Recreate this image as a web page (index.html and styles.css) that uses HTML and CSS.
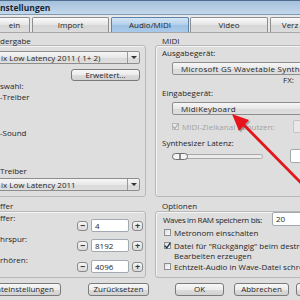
FILE: index.html
```html
<!DOCTYPE html>
<html>
<head>
<meta charset="utf-8">
<link rel="stylesheet" href="styles.css">
</head>
<body>
<div class="window">
  <div class="titlebar">nstellungen</div>
  <div class="tabs">
    <div class="tab tab-cut">ein</div>
    <div class="tab tab-import">Import</div>
    <div class="tab tab-sel">Audio/MIDI</div>
    <div class="tab tab-video">Video</div>
    <div class="tab tab-verz">Verz</div>
  </div>
  <div class="panel">
    <div class="grid">
      <div class="group left">
        <div class="glabel glabel-left">dergabe</div>
        <div class="gbox box-playback">
          <div class="combo combo-left"><span class="combo-text">ix Low Latency 2011 ( 1+ 2)</span><span class="combo-arrow"></span></div>
          <div class="btn btn-erw">Erweitert...</div>
          <div class="txt t-swahl">swahl:</div>
          <div class="txt t-treiber1">-Treiber</div>
          <div class="txt t-sound">-Sound</div>
          <div class="txt t-treiber2">Treiber</div>
          <div class="combo combo-left combo-2"><span class="combo-text">ix Low Latency 2011</span><span class="combo-arrow"></span></div>
        </div>
      </div>
      <div class="group right">
        <div class="glabel">MIDI</div>
        <div class="gbox box-midi">
          <div class="txt t-ausgabe">Ausgabegerät:</div>
          <div class="combo combo-right combo-out"><span class="combo-text">Microsoft GS Wavetable Synth</span></div>
          <div class="txt t-fx">FX:</div>
          <div class="txt t-eingabe">Eingabegerät:</div>
          <div class="combo combo-right combo-in"><span class="combo-text">MidiKeyboard</span></div>
          <div class="cbrow cbrow-dis">
            <span class="cb cb-dis"><svg width="7" height="7" viewBox="0 0 7 7"><path d="M1 3.5 L3 5.5 L6 1" fill="none" stroke="#a9a9a9" stroke-width="1.2"/></svg></span>
            <span class="cbtext-dis">MIDI-Zielkanal benutzen:</span>
            <span class="field field-dis"></span>
          </div>
          <div class="txt t-latenz">Synthesizer Latenz:</div>
          <div class="sliderrow">
            <div class="track"><div class="thumb"></div></div>
            <span class="field field-lat"></span>
          </div>
        </div>
      </div>

      <div class="group left">
        <div class="glabel glabel-left">ffer</div>
        <div class="gbox box-buffer">
          <div class="srow">
            <span class="slabel">ffer:</span>
            <div class="spin"><span class="sbtn">−</span><span class="field sfield">4</span><span class="sbtn">+</span></div>
          </div>
          <div class="srow">
            <span class="slabel">hrspur:</span>
            <div class="spin"><span class="sbtn">−</span><span class="field sfield">8192</span><span class="sbtn">+</span></div>
          </div>
          <div class="srow">
            <span class="slabel">rhören:</span>
            <div class="spin"><span class="sbtn">−</span><span class="field sfield">4096</span><span class="sbtn">+</span></div>
          </div>
        </div>
      </div>
      <div class="group right">
        <div class="glabel">Optionen</div>
        <div class="gbox box-opt">
          <div class="wrow"><span class="wlabel">Waves im RAM speichern bis:</span><span class="field field-waves">20</span></div>
          <div class="orow orow-1"><span class="cb"></span><span>Metronom einschalten</span></div>
          <div class="orow orow-2"><span class="cb"><svg width="7" height="7" viewBox="0 0 7 7"><path d="M0.8 3.6 L2.8 5.8 L6.3 0.8" fill="none" stroke="#1f3550" stroke-width="1.4"/></svg></span><span class="otext2">Datei für "Rückgängig" beim destruktiven<br>Bearbeiten erzeugen</span></div>
          <div class="orow orow-3"><span class="cb"></span><span>Echtzeit-Audio in Wave-Datei schreiben</span></div>
        </div>
      </div>
    </div>
    <div class="buttons">
      <div class="btnrow-left">
        <div class="btn btn-std">nteinstellungen</div>
        <div class="btn btn-reset">Zurücksetzen</div>
      </div>
      <div class="btnrow-right">
        <div class="btn btn-ok">OK</div>
        <div class="btn btn-cancel">Abbrechen</div>
        <div class="btn btn-more">Hilfe</div>
      </div>
    </div>
  </div>
</div>
<svg class="arrow" width="300" height="300" viewBox="0 0 300 300">
  <g opacity="0.25" transform="translate(1.5,1.5)">
    <line x1="242" y1="123" x2="302" y2="184" stroke="#000" stroke-width="2.6"/>
    <polygon points="232,114 249,120 239,131" fill="#000"/>
  </g>
  <line x1="242" y1="123" x2="302" y2="184" stroke="#e8141c" stroke-width="2.6"/>
  <polygon points="232,114 249,120 239,131" fill="#e8141c"/>
</svg>
</body>
</html>
```
FILE: styles.css
```css
html, body {
  margin: 0;
  padding: 0;
}
body {
  width: 300px;
  height: 300px;
  overflow: hidden;
  position: relative;
  background: #dedede;
  font-family: "Open Sans", "DejaVu Sans", sans-serif;
  font-size: 8px;
  color: #262626;
}
.window {
  width: 300px;
  display: flex;
  flex-direction: column;
}
.titlebar {
  border-top: 1px solid #4d6e90;
  background: linear-gradient(#a6c1dc, #c3d7eb);
  font-weight: bold;
  font-size: 8.5px;
  line-height: 14px;
  color: #1a2633;
  white-space: nowrap;
  box-sizing: border-box;
  height: 15px;
  border-bottom: 1px solid #7f9ab5;
}
.tabs {
  height: 17px;
  box-sizing: border-box;
  padding-top: 2px;
  display: flex;
  align-items: flex-end;
  background: #e9e9e9;
  white-space: nowrap;
}
.tab {
  height: 15px;
  box-sizing: border-box;
  border: 1px solid #8c8e91;
  border-bottom: none;
  border-radius: 2px 2px 0 0;
  background: linear-gradient(#fbfbfb, #e4e4e4 50%, #d6d6d6 51%, #dcdcdc);
  text-align: center;
  line-height: 13px;
  flex: none;
}
.tab-cut { width: 31px; margin-left: -1px; }
.tab-import { width: 77px; margin-left: 2px; }
.tab-sel {
  width: 78px;
  margin-left: 2px;
  background: linear-gradient(#d5e6f6, #b3cfea 50%, #9ec0e2 51%, #aacaea);
  border-color: #5b82a8;
}
.tab-video { width: 78px; margin-left: 1px; }
.tab-verz { width: 40px; margin-left: 2px; }
.panel {
  border-top: 1px solid #a8a8a8;
  padding-top: 3px;
}
.grid {
  display: grid;
  grid-template-columns: 146px 160px;
  column-gap: 9px;
  row-gap: 4px;
}
.group { min-width: 0; }
.glabel {
  height: 9px;
  line-height: 9px;
  padding-left: 7px;
  white-space: nowrap;
}
.glabel-left { padding-left: 0; }
.group:nth-child(3) .glabel,
.group:nth-child(4) .glabel { height: 10px; line-height: 10px; }
.gbox {
  border: 1px solid #b8b8b8;
  border-radius: 3px;
  box-shadow: inset 1px 1px 0 #f4f4f4;
  box-sizing: border-box;
  display: flex;
  flex-direction: column;
  white-space: nowrap;
}
.left .gbox {
  margin-left: -6px;
  width: 152px;
}
.right .gbox {
  width: 170px;
}
.box-playback, .box-midi { height: 152px; }
.box-buffer, .box-opt { height: 67px; }

.txt {
  line-height: 10px;
  height: 10px;
}
.left .txt { padding-left: 5px; }
.right .txt { padding-left: 6px; }

.combo {
  height: 13px;
  box-sizing: border-box;
  border: 1px solid #8d8d8d;
  border-radius: 2px;
  background: linear-gradient(#f6f6f6, #e8e8e8 50%, #dadada 51%, #dedede);
  display: flex;
  align-items: center;
  line-height: 11px;
}
.combo-left {
  margin-top: 5px;
  margin-right: 5px;
}
.combo-left .combo-text {
  padding-left: 5px;
  flex: 1;
  overflow: hidden;
}
.combo-arrow {
  width: 11px;
  height: 11px;
  border-left: 1px solid #9a9a9a;
  position: relative;
  flex: none;
}
.combo-arrow::after {
  content: "";
  position: absolute;
  left: 3px;
  top: 4px;
  border-left: 3px solid transparent;
  border-right: 3px solid transparent;
  border-top: 3px solid #333;
}
.combo-2 { margin-top: 2px; }
.combo-right {
  margin-left: 16px;
  width: 150px;
}
.combo-right .combo-text { padding-left: 8px; letter-spacing: 0.25px; }
.combo-out { margin-top: 4px; }
.combo-in { margin-top: 4px; }

.btn {
  height: 12px;
  box-sizing: border-box;
  border: 1px solid #7a7a7a;
  border-radius: 3px;
  background: linear-gradient(#f7f7f7, #ececec 50%, #dcdcdc 51%, #d2d2d2);
  text-align: center;
  line-height: 10px;
  white-space: nowrap;
}
.btn-erw {
  margin-top: 5px;
  margin-left: auto;
  margin-right: 5px;
  width: 69px;
}
.t-swahl { margin-top: 0; }
.t-treiber1 { margin-top: 1px; }
.t-sound { margin-top: 26px; }
.t-treiber2 { margin-top: 28px; }

.t-ausgabe { margin-top: 2px; }
.right .t-fx { padding-left: 127px; }
.t-eingabe { margin-top: 3px; }

.cb {
  width: 7px;
  height: 7px;
  box-sizing: border-box;
  border: 1px solid #8e8f8f;
  background: linear-gradient(135deg, #e0e0e0, #fbfbfb);
  flex: none;
  display: flex;
  align-items: center;
  justify-content: center;
  overflow: visible;
}
.cb svg { flex: none; }
.cbrow {
  display: flex;
  align-items: center;
  height: 13px;
  margin-top: 5px;
  padding-left: 16px;
}
.cb-dis { border-color: #b8b8b8; background: #eaeaea; }
.cbtext-dis {
  color: #a3a3a3;
  width: 111px;
  margin-left: 3px;
  flex: none;
}
.field {
  box-sizing: border-box;
  border: 1px solid #a3a9b1;
  border-radius: 2px;
  background: #fff;
  flex: none;
}
.field-dis {
  width: 30px;
  height: 13px;
  background: #e8e8e8;
  border-color: #c4c4c4;
}
.t-latenz { margin-top: 5px; }
.sliderrow {
  display: flex;
  align-items: center;
  height: 14px;
  margin-top: 1px;
  padding-left: 16px;
}
.track {
  width: 91px;
  height: 5px;
  box-sizing: border-box;
  border: 1px solid #a8a8a8;
  border-radius: 3px;
  background: #ececec;
  display: flex;
  align-items: center;
  flex: none;
}
.thumb {
  width: 16px;
  height: 7px;
  box-sizing: border-box;
  border: 1px solid #6f6f6f;
  border-radius: 4px;
  background: linear-gradient(90deg, #f4f4f4 0 45%, #8a8a8a 45% 55%, #f4f4f4 55%);
  margin-left: -1px;
}
.field-lat {
  width: 30px;
  height: 14px;
  margin-left: 27px;
}

.box-buffer { padding-top: 1px; }
.srow {
  height: 21px;
  display: flex;
  padding-left: 5px;
  padding-right: 2px;
}
.slabel {
  line-height: 10px;
  height: 10px;
}
.spin {
  margin-left: auto;
  margin-top: 6px;
  display: flex;
  align-items: center;
  gap: 3px;
  height: 13px;
}
.srow + .srow .spin { margin-top: 5px; }
.sbtn {
  width: 11px;
  height: 10px;
  box-sizing: border-box;
  border: 1px solid #8a8a8a;
  border-radius: 3px;
  background: linear-gradient(#f6f6f6, #d8d8d8);
  font-size: 9px;
  font-weight: bold;
  line-height: 8px;
  text-align: center;
  color: #333;
}
.sfield {
  width: 38px;
  height: 13px;
  line-height: 11px;
  padding-left: 3px;
}

.wrow {
  display: flex;
  align-items: center;
  height: 15px;
  padding-left: 7px;
}
.wlabel { width: 109px; flex: none; letter-spacing: -0.35px; }
.field-waves {
  width: 40px;
  height: 14px;
  line-height: 12px;
  padding-left: 3px;
  align-self: flex-start;
}
.orow {
  display: flex;
  align-items: flex-start;
  padding-left: 8px;
  line-height: 10px;
  gap: 3px;
}
.orow .cb { margin-top: 1px; }
.orow-1 { margin-top: 1px; }
.orow-2 { margin-top: 3px; }
.otext2 { line-height: 10px; }
.orow-3 { margin-top: 1px; }

.buttons {
  display: flex;
  margin-top: 5px;
}
.btnrow-left {
  display: flex;
  width: 175px;
  flex: none;
}
.btn-std {
  margin-left: -6px;
  width: 67px;
  height: 13px;
  text-align: right;
  padding-right: 6px;
}
.btn-reset {
  margin-left: 27px;
  width: 61px;
  height: 13px;
}
.btnrow-right { display: flex; flex: none; }
.btn-ok { width: 49px; height: 13px; }
.btn-cancel { width: 55px; margin-left: 10px; height: 13px; }
.btn-more { width: 55px; margin-left: 7px; height: 13px; }

.arrow {
  position: absolute;
  left: 0;
  top: 0;
  pointer-events: none;
}
```
